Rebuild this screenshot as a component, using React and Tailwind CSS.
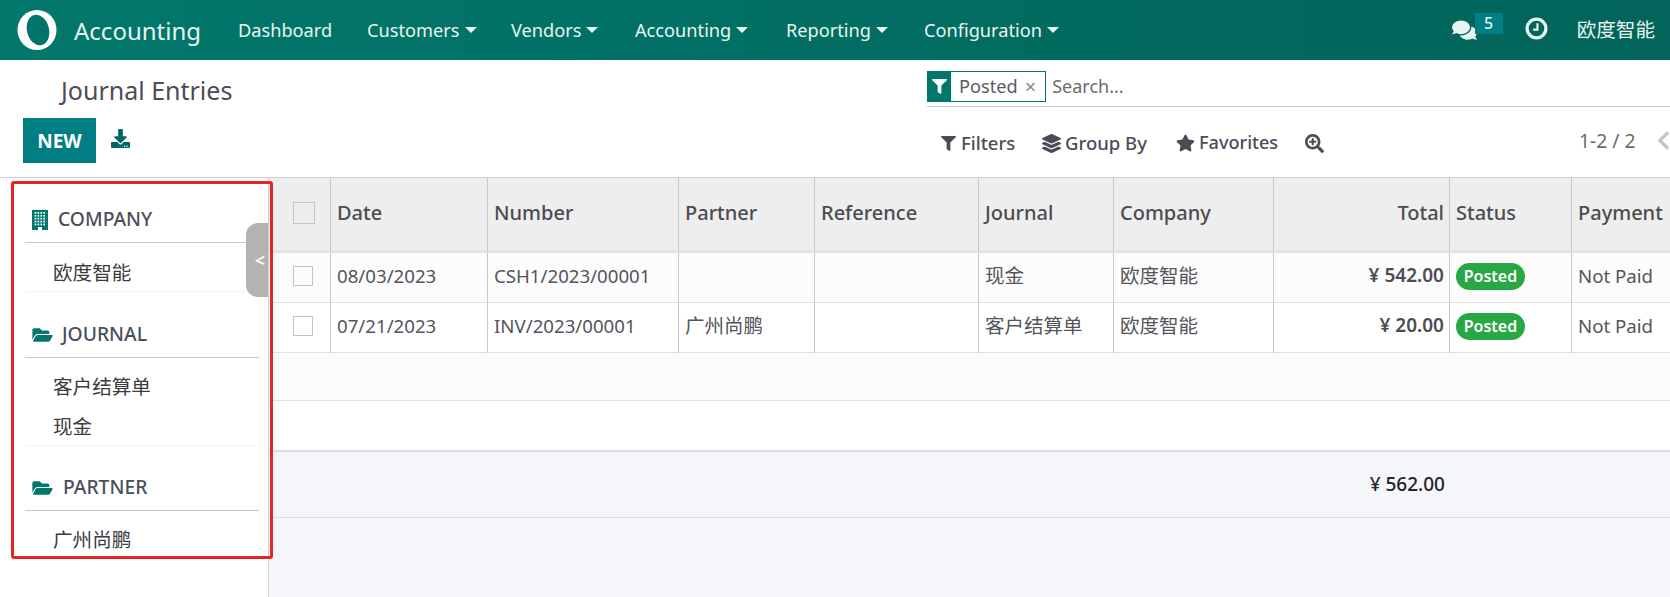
import React from "react";
import { FaFilter, FaLayerGroup, FaStar, FaSearchPlus, FaComments, FaFolderOpen, FaDownload, FaChevronLeft } from "react-icons/fa";

const font = { fontFamily: '"Noto Sans", "Noto Sans CJK SC", sans-serif' };

function Logo() {
  return (
    <svg viewBox="0 0 40 40" className="w-[40px] h-[40px] shrink-0">
      <ellipse cx="20" cy="20" rx="19.5" ry="20" fill="#fff" />
      <ellipse cx="21" cy="20" rx="11" ry="15.5" transform="rotate(-14 21 20)" fill="#02736a" />
      <path d="M26 3 Q34 6 37 13 L33 15 Q31 8 24 5 Z" fill="#fff" />
    </svg>
  );
}

function Clock() {
  return (
    <svg viewBox="0 0 24 24" className="w-[23px] h-[23px] mr-[29px] -mt-[2px]">
      <circle cx="12" cy="12" r="9.8" fill="none" stroke="#e6f5f1" strokeWidth="3.4" />
      <path d="M13 6.5 V13.2 H8.5" fill="none" stroke="#e6f5f1" strokeWidth="2.2" />
    </svg>
  );
}

function BuildingIcon() {
  const cells = [];
  for (let r = 0; r < 5; r++) {
    for (let c = 0; c < 4; c++) {
      cells.push(<rect key={`${r}-${c}`} x={2.6 + c * 2.9} y={2 + r * 2.9} width="1.7" height="1.7" fill="#fff" />);
    }
  }
  return (
    <svg viewBox="0 0 16 20" className="w-[16px] h-[20px] shrink-0">
      <rect width="16" height="20" fill="#02776a" />
      {cells}
      <rect x="6" y="17" width="4" height="3" fill="#fff" />
    </svg>
  );
}

function NavItem({ label, caret = true }) {
  return (
    <div className="flex items-center gap-[5px] text-[18.2px] text-[#e6f5f1] whitespace-nowrap">
      <span>{label}</span>
      {caret && <span className="w-0 h-0 border-x-[6px] border-x-transparent border-t-[6px] border-t-[#e6f5f1] mb-[2px]" />}
    </div>
  );
}

function Navbar() {
  return (
    <header className="h-[60px] flex items-center bg-gradient-to-r from-[#02786b] to-[#02645a] shrink-0">
      <div className="pl-[17px] flex items-center">
        <Logo />
        <span className="ml-[17px] pt-[2px] text-[24px] text-[#e6f5f1] w-[164px]">Accounting</span>
      </div>
      <nav className="flex items-center pt-[2px]">
        <div className="w-[129px]"><NavItem label="Dashboard" caret={false} /></div>
        <div className="w-[144px]"><NavItem label="Customers" /></div>
        <div className="w-[124px]"><NavItem label="Vendors" /></div>
        <div className="w-[151px]"><NavItem label="Accounting" /></div>
        <div className="w-[138px]"><NavItem label="Reporting" /></div>
        <NavItem label="Configuration" />
      </nav>
      <div className="ml-auto flex items-center pr-[15px] text-[#e6f5f1]">
        <div className="relative flex items-center mr-[48px]">
          <FaComments className="w-[25px] h-[22px]" />
          <span className="absolute left-[23px] -top-[6px] w-[28px] h-[21px] bg-[#017e84] text-[16px] font-medium leading-[21px] text-center">5</span>
        </div>
        <Clock />
        <span className="text-[19.6px] -mt-[1px]">欧度智能</span>
      </div>
    </header>
  );
}

function ControlPanel() {
  return (
    <section className="h-[118px] shrink-0 bg-white border-b border-[#d0d0d4] flex">
      <div className="w-[927px] shrink-0 flex flex-col">
        <h1 className="pl-[61px] pt-[12px] text-[25px] leading-[36px] text-[#4c4c58] font-normal">Journal Entries</h1>
        <div className="pl-[23px] pt-[10px] flex items-center">
          <button className="w-[73px] h-[45px] pt-[1px] bg-[#017e84] text-white text-[19px] font-bold">NEW</button>
          <FaDownload className="ml-[15px] w-[19px] h-[19px] text-[#01666b] -mt-[4px]" />
        </div>
      </div>
      <div className="flex-1 flex flex-col">
        <div className="mt-[11px] h-[36px] border-b border-[#c8c8cc] flex items-start">
          <div className="flex h-[31px] items-stretch border border-[#02776a]">
            <div className="w-[23px] bg-[#02776a] flex items-center justify-center">
              <FaFilter className="w-[15px] h-[15px] text-white" />
            </div>
            <div className="pl-[8px] pr-[9px] flex items-center gap-[7px] text-[18.2px] text-[#5a5a64]">
              <span>Posted</span>
              <span className="text-[20px] text-[#8a8a8a] leading-none">×</span>
            </div>
          </div>
          <span className="ml-[6px] text-[18px] leading-[31px] text-[#6b6b6b]">Search...</span>
        </div>
        <div className="flex items-center h-[60px] pt-[12px] text-[18.5px] text-[#4c4c58] pl-[14px]">
          <div className="flex items-center gap-[5px] font-medium w-[101px]"><FaFilter className="w-[15px] h-[15px]" /><span>Filters</span></div>
          <div className="flex items-center gap-[4px] font-medium w-[134px]"><FaLayerGroup className="w-[19px] h-[19px]" /><span>Group By</span></div>
          <div className="flex items-center gap-[4px] font-medium w-[129px] text-[18.1px]"><FaStar className="w-[19px] h-[18px]" /><span>Favorites</span></div>
          <FaSearchPlus className="w-[19px] h-[19px]" />
          <span className="ml-[255px] text-[19.3px] text-[#6a6a72] font-normal -mt-[4px] whitespace-nowrap">1-2 / 2</span>
          <FaChevronLeft className="ml-[20px] w-[15px] h-[21px] text-[#c4c4c8] -mt-[6px] shrink-0" />
        </div>
      </div>
    </section>
  );
}

function SectionHead({ icon, label, gap }) {
  return (
    <div className="h-[45px] pb-[1px] border-b border-[#c8c8cc] flex items-center pl-[7px] font-medium text-[19.3px] text-[#4a4f5a]">
      {icon}
      <span className={gap}>{label}</span>
    </div>
  );
}

function Sidebar() {
  const folder = <FaFolderOpen className="w-[21px] h-[18px] text-[#02776a]" />;
  return (
    <aside className="w-[269px] shrink-0 bg-white border-r border-[#d0d0d4] relative">
      <div className="pt-[20px] pl-[25px] pr-[9px]">
        <SectionHead icon={<BuildingIcon />} label="COMPANY" gap="ml-[10px]" />
        <ul className="pt-[12px] border-b border-[#f4f4f6] text-[19.6px] text-[#3c3c3c] pl-[28px]">
          <li className="h-[36px] leading-[36px]">欧度智能</li>
        </ul>
        <div className="mt-[21px]">
          <SectionHead icon={folder} label="JOURNAL" gap="ml-[9px]" />
        </div>
        <ul className="pt-[11px] border-b border-[#f4f4f6] text-[19.6px] text-[#3c3c3c] pl-[28px] flex flex-col gap-[4px]">
          <li className="h-[36px] leading-[36px]">客户结算单</li>
          <li className="h-[36px] leading-[36px]">现金</li>
        </ul>
        <div className="mt-[20px]">
          <SectionHead icon={folder} label="PARTNER" gap="ml-[10px]" />
        </div>
        <ul className="pt-[11px] text-[19.6px] text-[#3c3c3c] pl-[28px]">
          <li className="h-[36px] leading-[36px]">广州尚鹏</li>
        </ul>
      </div>
      <div className="absolute right-0 top-[45px] w-[22px] h-[74px] bg-[#b3b3b3] rounded-l-[12px] flex items-center justify-end pr-[3px] text-white text-[18px] font-semibold">&lt;</div>
    </aside>
  );
}

function Check({ size }) {
  return <span className={`block border border-[#c4c4c8] ${size}`} />;
}

const th = "h-[75px] pb-[2px] border-b-[3px] border-b-[#e4e4e6] border-r border-r-[#c8c8cc] pl-[6px] pr-[5px] text-left font-medium text-[#4c4c50]";
const td = "h-[50px] pb-[4px] border-b border-b-[#e2e2e6] border-r border-r-[#c8c8cc] pl-[6px] pr-[5px] font-normal text-[#55555c]";
const cjk = "text-[19.5px]";

function Tag() {
  return <span className="inline-flex items-center justify-center w-[69px] h-[27px] rounded-full bg-[#28a745] text-white text-[16px] font-semibold">Posted</span>;
}

function Row({ bg, date, number, partner, journal, total }) {
  return (
    <tr className={bg}>
      <td className={td}><div className="pl-[18px]"><Check size="w-[20px] h-[20px]" /></div></td>
      <td className={td}>{date}</td>
      <td className={td}>{number}</td>
      <td className={`${td} ${cjk}`}>{partner}</td>
      <td className={td}></td>
      <td className={`${td} ${cjk}`}>{journal}</td>
      <td className={`${td} ${cjk}`}>欧度智能</td>
      <td className={`${td} !text-right !font-semibold !text-[#4c4c54] !text-[19px]`}>{total}</td>
      <td className={td}><Tag /></td>
      <td className="h-[50px] pb-[4px] border-b border-b-[#e2e2e6] pl-[6px] text-[#55555c] whitespace-nowrap">Not Paid</td>
    </tr>
  );
}

function ListTable() {
  return (
    <div className="flex-1 min-w-0 overflow-hidden bg-[#f5f6fa]">
      <table className="table-fixed border-separate border-spacing-0 w-[1401px] text-[18.67px]">
        <colgroup>
          <col className="w-[62px]" />
          <col className="w-[157px]" />
          <col className="w-[191px]" />
          <col className="w-[136px]" />
          <col className="w-[164px]" />
          <col className="w-[135px]" />
          <col className="w-[160px]" />
          <col className="w-[176px]" />
          <col className="w-[122px]" />
          <col className="w-[98px]" />
        </colgroup>
        <thead className="text-[20px]">
          <tr className="bg-[#eeeeee]">
            <th className={th}><div className="pl-[18px]"><Check size="w-[22px] h-[22px]" /></div></th>
            <th className={th}>Date</th>
            <th className={th}>Number</th>
            <th className={th}>Partner</th>
            <th className={th}>Reference</th>
            <th className={th}>Journal</th>
            <th className={th}>Company</th>
            <th className={`${th} !text-right`}>Total</th>
            <th className={th}>Status</th>
            <th className="h-[75px] pb-[2px] border-b-[3px] border-b-[#e4e4e6] pl-[6px] text-left font-medium text-[#4c4c50] whitespace-nowrap">Payment</th>
          </tr>
        </thead>
        <tbody>
          <Row bg="bg-[#fcfcfc]" date="08/03/2023" number="CSH1/2023/00001" partner="" journal="现金" total="¥ 542.00" />
          <Row bg="bg-white" date="07/21/2023" number="INV/2023/00001" partner="广州尚鹏" journal="客户结算单" total="¥ 20.00" />
          <tr className="bg-[#fbfbfb]"><td colSpan={10} className="h-[48px] border-b border-b-[#e2e2e6]"></td></tr>
          <tr className="bg-white"><td colSpan={10} className="h-[49px]"></td></tr>
        </tbody>
        <tfoot>
          <tr>
            <td colSpan={7} className="h-[68px] border-t-[2px] border-t-[#dcdde2] border-b border-b-[#dcdde2]"></td>
            <td className="h-[68px] pl-[5px] pr-[5px] border-t-[2px] border-t-[#dcdde2] border-b border-b-[#dcdde2] text-right font-medium text-[19px] text-[#212529]">¥ 562.00</td>
            <td colSpan={2} className="h-[68px] border-t-[2px] border-t-[#dcdde2] border-b border-b-[#dcdde2]"></td>
          </tr>
        </tfoot>
      </table>
    </div>
  );
}

export default function App() {
  return (
    <div className="w-[1670px] h-[597px] relative overflow-hidden flex flex-col bg-white" style={font}>
      <Navbar />
      <ControlPanel />
      <main className="flex-1 min-h-0 flex">
        <Sidebar />
        <ListTable />
      </main>
      <div className="absolute left-[11px] top-[181px] w-[262px] h-[378px] border-[3px] border-[#e62424] rounded-[3px] pointer-events-none" />
    </div>
  );
}
